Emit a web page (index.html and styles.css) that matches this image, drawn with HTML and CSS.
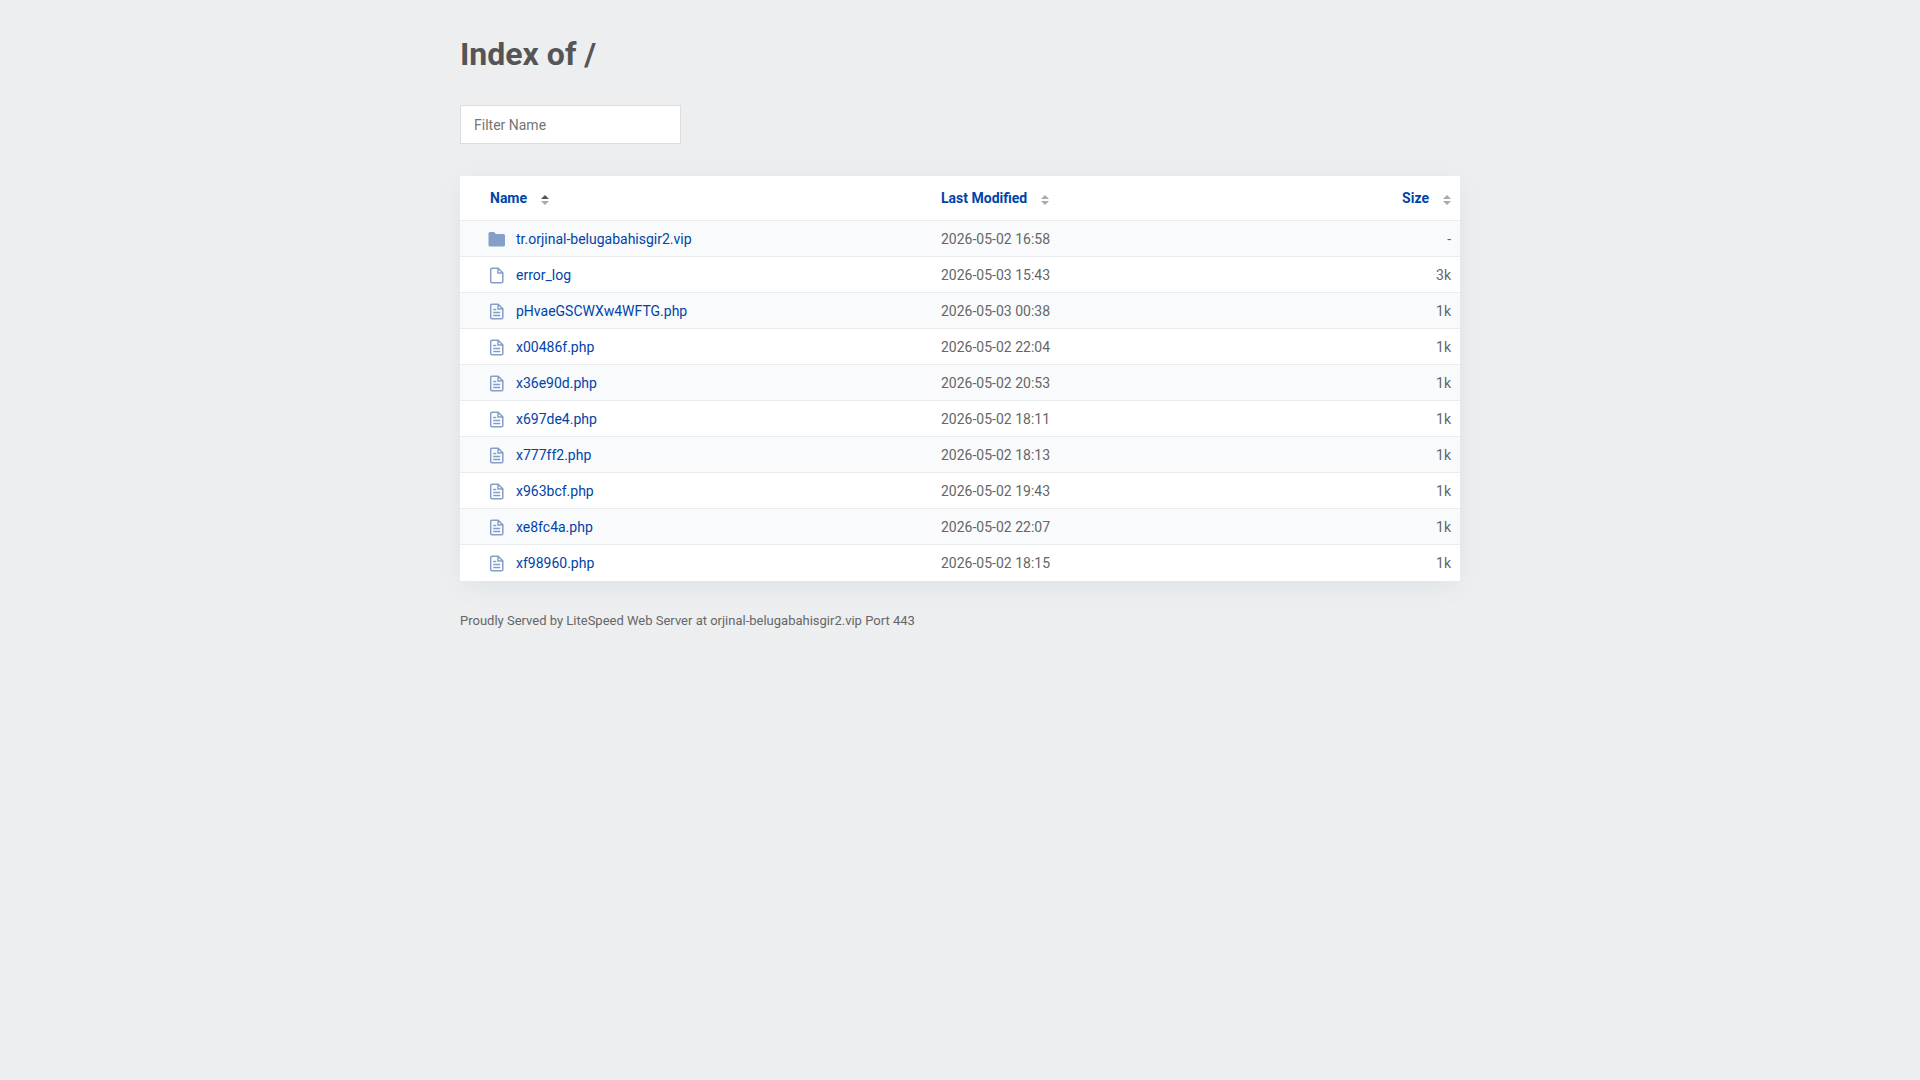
FILE: index.html
```html
<!DOCTYPE html>
<html lang="en">
<head>
  <meta charset="UTF-8">
  <meta name="viewport" content="width=device-width, initial-scale=1.0">
  <title>Index of /</title>
  <link rel="stylesheet" href="styles.css">
</head>
<body>
  <svg class="sprite" aria-hidden="true">
    <symbol id="folder" viewBox="0 0 20 20">
      <path d="M1.500 4.500a1.500 1.500 0 0 1 1.500-1.500h4l2 2h7.500a1.500 1.500 0 0 1 1.500 1.500v9.500a1.500 1.500 0 0 1-1.500 1.500H3a1.500 1.500 0 0 1-1.500-1.500z" fill="currentColor"/>
    </symbol>
    <symbol id="file" viewBox="0 0 20 20">
      <path d="M5 3.200h6.200l4.600 4.600v8.700a1.300 1.300 0 0 1-1.300 1.300H5a1.300 1.300 0 0 1-1.300-1.300v-12A1.300 1.300 0 0 1 5 3.200zM11 3.500v4.500h4.500" fill="none" stroke="currentColor" stroke-width="1.500"/>
    </symbol>
    <symbol id="script" viewBox="0 0 20 20">
      <use href="#file"/>
      <path d="M6.200 8.500h3M6.200 11.500h7M6.200 14.500h7" fill="none" stroke="currentColor" stroke-width="1.400"/>
    </symbol>
    <symbol id="sort" viewBox="0 0 8 10">
      <path class="up" d="M0 4L4 0l4 4z"/>
      <path class="down" d="M0 6h8l-4 4z"/>
    </symbol>
    <symbol id="sort-up" viewBox="0 0 8 10">
      <path d="M0 4L4 0l4 4z" fill="#555"/>
      <path class="down" d="M0 6h8l-4 4z"/>
    </symbol>
  </svg>

  <div class="content">
    <h1>Index of /</h1>

    <input type="text" id="filter" class="filter" placeholder="Filter Name" aria-label="Filter Name">

    <table id="list">
      <thead>
        <tr>
          <th class="name" aria-sort="ascending"><button type="button">Name<svg class="sort"><use href="#sort-up"/></svg></button></th>
          <th class="date"><button type="button">Last Modified<svg class="sort"><use href="#sort"/></svg></button></th>
          <th class="size"><button type="button">Size<svg class="sort"><use href="#sort"/></svg></button></th>
        </tr>
      </thead>
      <tbody>
        <tr>
          <td class="name"><a href="#"><svg class="icon"><use href="#folder"/></svg>tr.orjinal-belugabahisgir2.vip</a></td>
          <td>2026-05-02 16:58</td>
          <td class="size">-</td>
        </tr>
        <tr>
          <td class="name"><a href="#"><svg class="icon"><use href="#file"/></svg>error_log</a></td>
          <td>2026-05-03 15:43</td>
          <td class="size">3k</td>
        </tr>
        <tr>
          <td class="name"><a href="#"><svg class="icon"><use href="#script"/></svg>pHvaeGSCWXw4WFTG.php</a></td>
          <td>2026-05-03 00:38</td>
          <td class="size">1k</td>
        </tr>
        <tr>
          <td class="name"><a href="#"><svg class="icon"><use href="#script"/></svg>x00486f.php</a></td>
          <td>2026-05-02 22:04</td>
          <td class="size">1k</td>
        </tr>
        <tr>
          <td class="name"><a href="#"><svg class="icon"><use href="#script"/></svg>x36e90d.php</a></td>
          <td>2026-05-02 20:53</td>
          <td class="size">1k</td>
        </tr>
        <tr>
          <td class="name"><a href="#"><svg class="icon"><use href="#script"/></svg>x697de4.php</a></td>
          <td>2026-05-02 18:11</td>
          <td class="size">1k</td>
        </tr>
        <tr>
          <td class="name"><a href="#"><svg class="icon"><use href="#script"/></svg>x777ff2.php</a></td>
          <td>2026-05-02 18:13</td>
          <td class="size">1k</td>
        </tr>
        <tr>
          <td class="name"><a href="#"><svg class="icon"><use href="#script"/></svg>x963bcf.php</a></td>
          <td>2026-05-02 19:43</td>
          <td class="size">1k</td>
        </tr>
        <tr>
          <td class="name"><a href="#"><svg class="icon"><use href="#script"/></svg>xe8fc4a.php</a></td>
          <td>2026-05-02 22:07</td>
          <td class="size">1k</td>
        </tr>
        <tr>
          <td class="name"><a href="#"><svg class="icon"><use href="#script"/></svg>xf98960.php</a></td>
          <td>2026-05-02 18:15</td>
          <td class="size">1k</td>
        </tr>
      </tbody>
    </table>

    <footer>Proudly Served by LiteSpeed Web Server at orjinal-belugabahisgir2.vip Port 443</footer>
  </div>

  <script>
    document.getElementById('filter').addEventListener('input', function () {
      const term = this.value.toLowerCase();
      document.querySelectorAll('#list tbody tr').forEach(function (row) {
        row.hidden = !row.cells[0].textContent.toLowerCase().includes(term);
      });
    });
  </script>
</body>
</html>
```
FILE: styles.css
```css
* {
  box-sizing: border-box;
}
body {
  font-family: Roboto, "Liberation Sans", sans-serif;
  font-size: 14px;
  line-height: 20px;
  color: #666;
  background: #edeef0;
  margin: 0;
  padding: 32px 20px;
}
.sprite {
  display: none;
}
.content {
  max-width: 1000px;
  margin: 0 auto;
}
h1 {
  margin: 0 0 29px;
  font-size: 32px;
  line-height: 44px;
  color: #555;
}
.filter {
  display: block;
  width: 221px;
  height: 39px;
  margin-bottom: 32px;
  padding: 0 13px;
  font: inherit;
  color: #555;
  background: #fff;
  border: 1px solid #dcdde0;
}
.filter::placeholder {
  color: #757575;
}
table {
  width: 100%;
  table-layout: fixed;
  border-collapse: separate;
  border-spacing: 0;
  background: #fff;
  box-shadow: 0 5px 25px -4px #d9dfe0;
}
th {
  height: 45px;
  padding: 0 9px;
  text-align: left;
  border-bottom: 1px solid #e9ebec;
}
th button {
  padding: 0;
  font: inherit;
  color: #0044a9;
  background: none;
  border: 0;
  cursor: pointer;
}
th.name {
  width: 472px;
  padding-left: 30px;
}
td {
  height: 36px;
  padding: 0 9px;
  border-bottom: 1px solid #e9ebec;
}
tbody tr:nth-child(odd) {
  background: #f9fafc;
}
tbody tr:last-child td {
  border-bottom: 0;
}
td.name {
  padding-left: 27px;
}
th.size,
td.size {
  width: 160px;
  text-align: right;
}
a {
  display: flex;
  align-items: center;
  color: #0044a9;
  text-decoration: none;
}
a:hover {
  text-decoration: underline;
}
.icon {
  width: 20px;
  height: 20px;
  margin-right: 9px;
  color: #869fc8;
}
.sort {
  width: 8px;
  height: 10px;
  margin-left: 14px;
  vertical-align: -2px;
}
.up,
.down {
  fill: #aaa;
}
footer {
  padding-top: 30px;
  font-size: 13px;
}
```
